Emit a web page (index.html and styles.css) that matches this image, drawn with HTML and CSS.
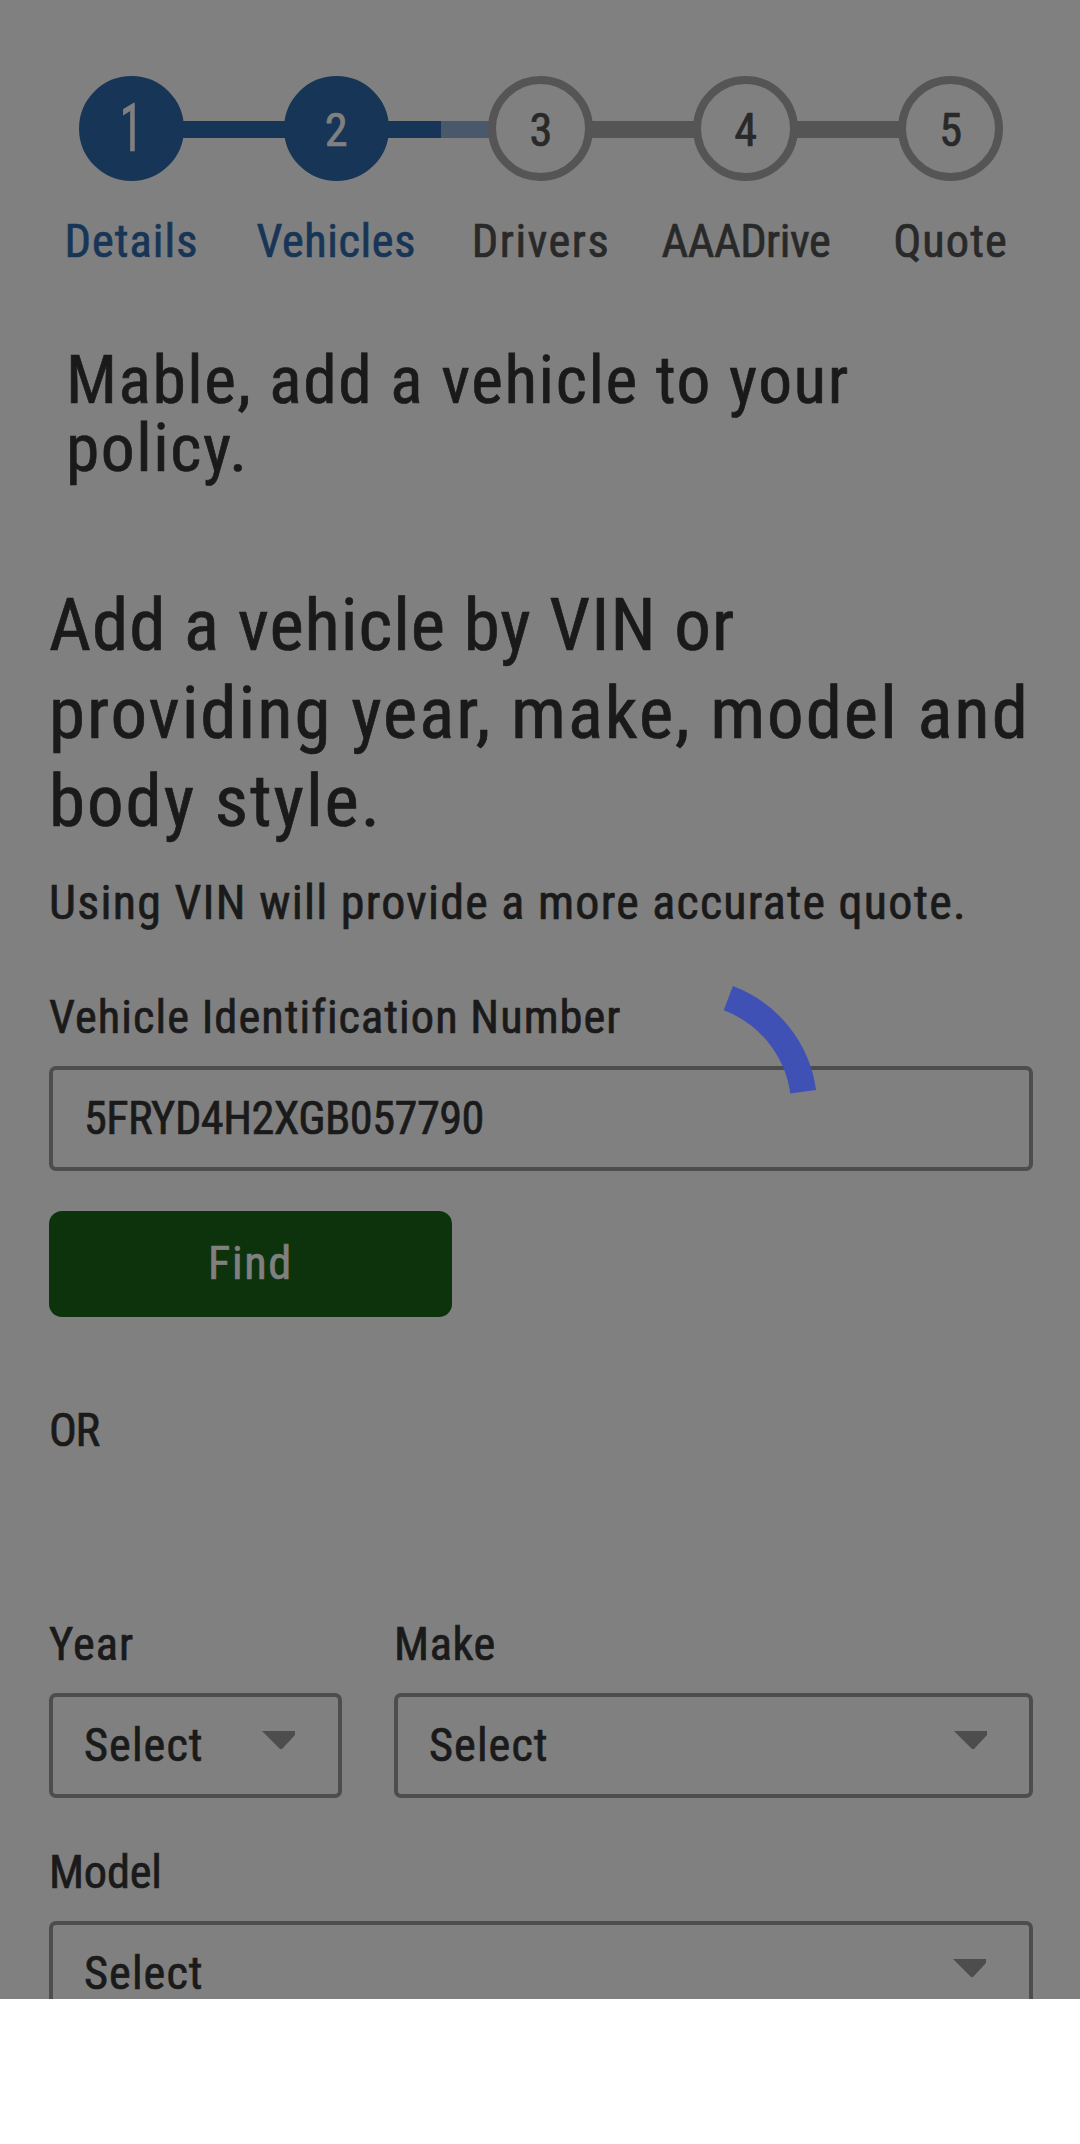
FILE: index.html
```html
<!DOCTYPE html>
<html lang="en">
<head>
<meta charset="utf-8">
<title>Add a vehicle</title>
<link rel="stylesheet" href="styles.css">
</head>
<body>
<main class="page">
  <ol class="steps">
    <li class="step step-done"><span class="dot dot-large"><span class="digit">1</span></span><span class="step-name">Details</span></li>
    <li class="step step-done"><span class="dot">2</span><span class="step-name name-snug">Vehicles</span></li>
    <li class="step"><span class="dot">3</span><span class="step-name name-wide">Drivers</span></li>
    <li class="step"><span class="dot">4</span><span class="step-name name-tight">AAADrive</span></li>
    <li class="step"><span class="dot">5</span><span class="step-name">Quote</span></li>
  </ol>

  <h1 class="title">Mable, add a vehicle to your<br>policy.</h1>

  <h2 class="subtitle"><span class="lead">Add a vehicle by VIN or</span><br>providing year, make, model and<br>body style.</h2>
  <p class="hint">Using VIN will provide a more accurate quote.</p>

  <form class="form">
    <span class="label">Vehicle Identification Number</span>
    <div class="box"><span class="vin">5FRYD4H2XGB057790</span></div>
    <button class="find" type="button">Find</button>
    <p class="or">OR</p>
    <div class="row">
      <div class="field field-year">
        <span class="label">Year</span>
        <div class="box box-inset"><span>Select</span><i class="arrow"></i></div>
      </div>
      <div class="field field-make">
        <span class="label label-snug">Make</span>
        <div class="box"><span>Select</span><i class="arrow"></i></div>
      </div>
    </div>
    <div class="field field-model">
      <span class="label label-tight">Model</span>
      <div class="box box-inset"><span>Select</span><i class="arrow"></i></div>
    </div>
  </form>

  <svg class="spinner" viewBox="0 0 260 260" aria-hidden="true">
    <path d="M171.3 20.1A117.3 117.3 0 0 1 246.2 113.8" fill="none" stroke="#3f51b5" stroke-width="26"/>
  </svg>
</main>
</body>
</html>
```
FILE: styles.css
```css
* {
  box-sizing: border-box;
}

body {
  margin: 0;
  background: #fff;
  font-family: "Roboto Condensed", Roboto, "Liberation Sans", sans-serif;
  font-stretch: 75%;
  font-size: 46.4px;
  line-height: 60px;
  letter-spacing: 1.05px;
  color: #1a1a1a;
  -webkit-text-stroke: 0.7px currentColor;
}

.page {
  position: relative;
  height: 1999px;
  padding: 76px 47px 0 49px;
  overflow: hidden;
  background: #808080;
}

/* Progress steps */
.steps {
  display: flex;
  width: 1024px;
  margin: 0 0 0 -20px;
  padding: 0;
  list-style: none;
  background:
    linear-gradient(90deg, #173557 310px, #49596b 310px 410px, #555 410px)
    102px 45px / 820px 17px no-repeat;
}

.step {
  display: flex;
  flex: 1;
  flex-direction: column;
  align-items: center;
  gap: 30px;
  color: #292929;
}

.dot {
  width: 105px;
  height: 105px;
  border: 8px solid #555;
  border-radius: 50%;
  background: #808080;
  line-height: 92px;
  text-align: center;
  letter-spacing: 0;
}

.step-done {
  color: #173557;
}

.step-done .dot {
  border-color: #173557;
  background: #173557;
  color: #808080;
}

.dot-large {
  font-size: 66px;
  line-height: 89px;
}

.digit {
  display: inline-block;
  transform: scaleX(0.72);
}

.name-snug {
  letter-spacing: 0.6px;
}

.name-wide {
  letter-spacing: 1.5px;
}

.name-tight {
  letter-spacing: -0.5px;
}

/* Headings */
.title {
  margin: 75px 0 0 17px;
  font-size: 67.5px;
  font-weight: 400;
  line-height: 68px;
  letter-spacing: 1.55px;
}

.subtitle {
  margin: 99px 0 0;
  font-size: 73px;
  font-weight: 400;
  line-height: 88px;
  letter-spacing: 1.95px;
  white-space: nowrap;
}

.lead {
  letter-spacing: 0.95px;
}

.hint {
  margin: 28px 0 0;
  font-size: 48px;
  letter-spacing: 1.27px;
}

/* Form */
.form {
  margin-top: 54px;
}

.label {
  display: block;
}

.label-snug {
  letter-spacing: 0.6px;
}

.label-tight {
  letter-spacing: -0.2px;
}

.box {
  display: flex;
  align-items: center;
  justify-content: space-between;
  height: 105px;
  margin-top: 19px;
  padding: 0 42px 2px 31px;
  border: 4px solid #4d4d4d;
  border-radius: 7px;
}

.box-inset {
  padding-right: 43px;
}

.vin {
  letter-spacing: -0.55px;
}

.find {
  display: block;
  width: 403px;
  height: 106px;
  margin-top: 40px;
  padding: 0 0 2px;
  border: 0;
  border-radius: 13px;
  background: #0d330d;
  color: #808080;
  font: inherit;
  letter-spacing: 1.6px;
}

.or {
  margin: 83px 0 0;
  letter-spacing: -1.5px;
}

.row {
  display: flex;
  justify-content: space-between;
  margin-top: 154px;
}

.field-year {
  width: 293px;
}

.field-make {
  width: 639px;
}

.field-model {
  margin-top: 44px;
}

.arrow {
  width: 33px;
  height: 18px;
  margin-top: -9px;
  background: #4d4d4d;
  clip-path: polygon(0 0, 100% 0, 100% 4px, 20px 100%, 18px 100%);
}

/* Loading indicator over the form */
.spinner {
  position: absolute;
  left: 557px;
  top: 978px;
  width: 260px;
  height: 260px;
}
```
